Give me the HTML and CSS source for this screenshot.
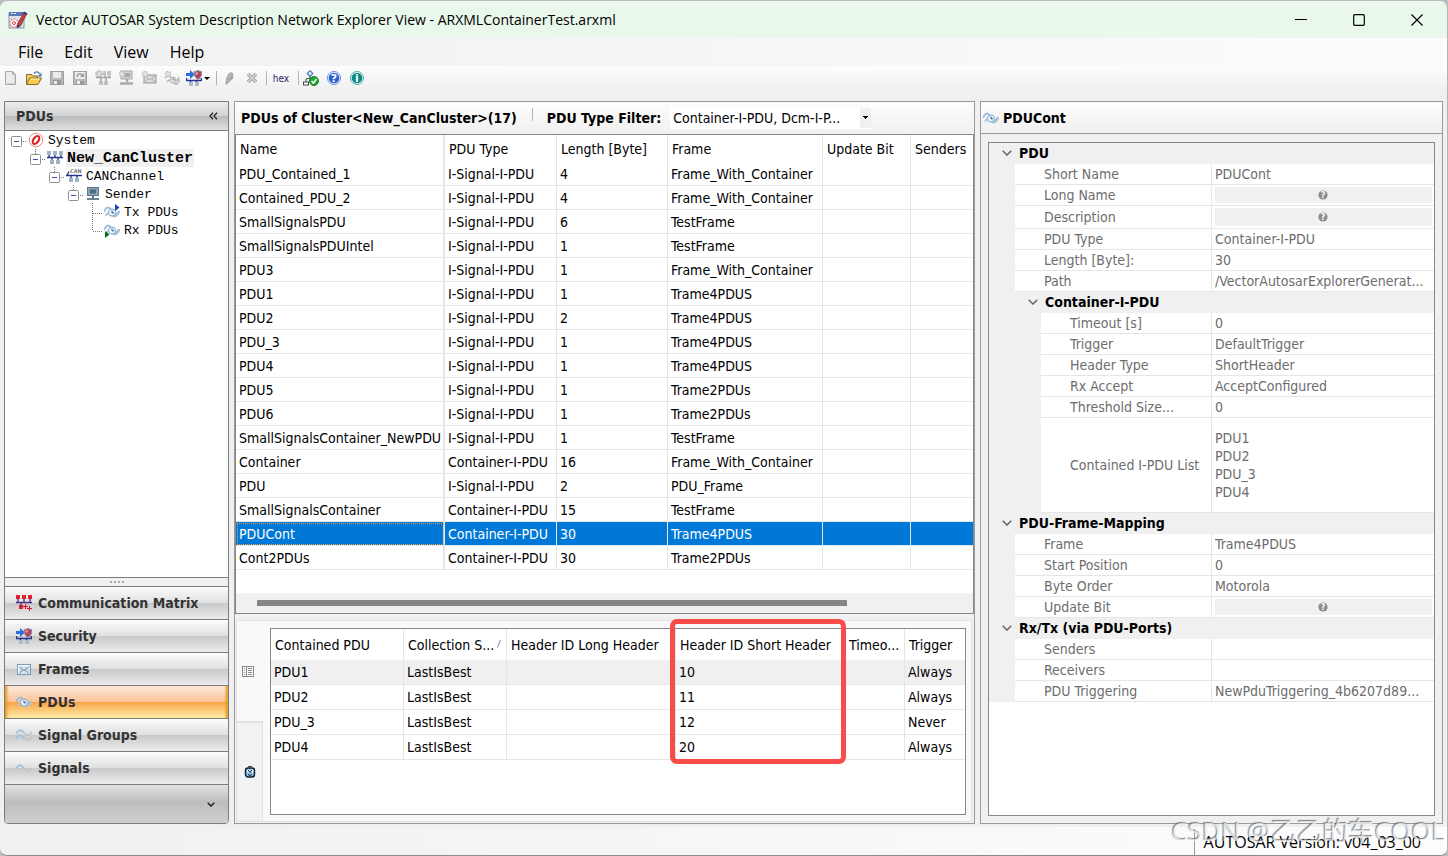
FILE: index.html
```html
<!DOCTYPE html>
<html lang="en">
<head>
    <meta charset="UTF-8">
    <meta name="viewport" content="width=device-width, initial-scale=1.0">
    <title>Vector AUTOSAR System Description Network Explorer View</title>
    <link rel="stylesheet" href="styles.css">
</head>
<body>
    <!-- Icon symbols -->
    <svg class="symbols" aria-hidden="true">
        <symbol id="i-app" viewBox="0 0 20 20">
            <rect x="1" y="3" width="15" height="15" fill="#dfe3ee" stroke="#8c93a8"/>
            <rect x="1" y="2" width="15" height="4" fill="#5a78b8"/>
            <rect x="3" y="3" width="2" height="1" fill="#fff"/>
            <rect x="6" y="3" width="2" height="1" fill="#fff"/>
            <circle cx="6" cy="13" r="4" fill="#fff" stroke="#e8908c" stroke-width="1.500" stroke-dasharray="2 1"/>
            <circle cx="6" cy="13" r="1.500" fill="none" stroke="#e04040"/>
            <path d="M16 2l3 1.500L12.500 16l-3.500 2 .5-4z" fill="#d8382c" stroke="#5b4a74" stroke-width=".8"/>
            <path d="M15.500 2.500l3.500 2" stroke="#333a70" stroke-width="2"/>
            <path d="M9.500 14.500l2.500 1.500-3 2z" fill="#3c3c50"/>
        </symbol>
        <symbol id="i-new" viewBox="0 0 16 16">
            <path d="M2.500 1.500h7l3 3v10h-10z" fill="#ececec" stroke="#a8a8a8"/>
            <path d="M9.500 1.500v3h3" fill="none" stroke="#a8a8a8"/>
            <path d="M11.500 6v7.500H4" fill="none" stroke="#cfcfcf"/>
        </symbol>
        <symbol id="i-open" viewBox="0 0 16 16">
            <path d="M.5 14.500v-10h5l1 1.500h5v3" fill="#f3cf60" stroke="#8a6a28"/>
            <path d="M.5 14.500L3.500 8h12l-3.500 6.500z" fill="#f9cb4c" stroke="#8a6a28"/>
            <path d="M4.500 9h9" stroke="#fff0a8"/>
            <path d="M8 3.500c2-2.500 4.500-2 5.500.5" fill="none" stroke="#4876a8" stroke-width="1.300"/>
            <path d="M15.500 2.500v4h-4z" fill="#4876a8"/>
        </symbol>
        <symbol id="i-save" viewBox="0 0 16 16">
            <rect x="1.500" y="1.500" width="13" height="13" fill="#b8b8b8" stroke="#a0a0a0"/>
            <rect x="4" y="2" width="8" height="6" fill="#ececec"/>
            <rect x="4" y="10" width="8" height="5" fill="#999"/>
            <rect x="5" y="11" width="3" height="3" fill="#eee"/>
        </symbol>
        <symbol id="i-saveas" viewBox="0 0 16 16">
            <rect x="1.500" y="1.500" width="13" height="13" fill="#b8b8b8" stroke="#a0a0a0"/>
            <rect x="3" y="2" width="10" height="7" fill="#ececec"/>
            <path d="M5 7c0-3 3-4 5-2" fill="none" stroke="#999" stroke-width="1.500"/>
            <path d="M12 3v4H8z" fill="#999"/>
            <rect x="4" y="11" width="8" height="4" fill="#999"/>
            <rect x="5" y="11" width="3" height="3" fill="#eee"/>
        </symbol>
        <symbol id="i-gcluster" viewBox="0 0 16 16">
            <circle cx="4" cy="4" r="3" fill="#ddd" stroke="#bbb" stroke-dasharray="1.500 1" stroke-width="2"/>
            <path d="M8 1h3v4H8zM12 1h4v4h-4z" fill="#c4c4c4"/>
            <path d="M1 7.500h15M6 8v3M11 8v3M10 5v2M14 5v2" stroke="#a4a4a4" stroke-width="1.500"/>
            <path d="M4 11h4v4H4zM9 11h4v4H9z" fill="#c0c0c0"/>
        </symbol>
        <symbol id="i-gecu" viewBox="0 0 16 16">
            <rect x="3" y="1" width="11" height="8" fill="#d0d0d0" stroke="#aaa"/>
            <rect x="6" y="3" width="6" height="4" fill="#aaa"/>
            <circle cx="4" cy="4" r="2.500" fill="#e4e4e4" stroke="#bbb" stroke-dasharray="1.500 1" stroke-width="1.500"/>
            <path d="M9 9v3M2 13.500h13" stroke="#aaa" stroke-width="2.500"/>
        </symbol>
        <symbol id="i-gframe" viewBox="0 0 16 16">
            <rect x="2" y="4" width="14" height="10" fill="#c8c8c8"/>
            <rect x="3.500" y="5.500" width="11" height="7" fill="#dcdcdc" stroke="#b4b4b4"/>
            <path d="M4 6l5 4 5-4M4 12l3-3M14 12l-3-3" fill="none" stroke="#aaa"/>
            <circle cx="4" cy="4" r="2.500" fill="#e8e8e8" stroke="#bbb" stroke-dasharray="1.500 1" stroke-width="1.500"/>
        </symbol>
        <symbol id="i-gpdu" viewBox="0 0 16 16">
            <path d="M1 8c3-4 5-2 7 1s5 3 7-2M3 12c3-4 5-1 7 1s4 1 6-4" fill="none" stroke="#c0c0c0" stroke-width="1.800"/>
            <circle cx="9" cy="10" r="3" fill="#e6e6e6" stroke="#b0b0b0"/>
            <path d="M9 8v2h2" fill="none" stroke="#888"/>
            <circle cx="4" cy="4" r="2.500" fill="#e4e4e4" stroke="#bbb" stroke-dasharray="1.500 1" stroke-width="1.500"/>
        </symbol>
        <symbol id="i-security" viewBox="0 0 16 16">
            <path d="M0 3h4V0l5 4.500L4 9V6H0z" fill="#2f6fd8"/>
            <path d="M0 10.500h16M4.500 10v2M10.500 10v2M.5 8v3M15.500 8v3" stroke="#27348b" stroke-width="1.500"/>
            <path d="M8 1.500c2 0 3-.5 4-1.500 1 1 2 1.500 4 1.500 0 4-1 6-4 8-3-2-4-4-4-8z" fill="#b0455c" stroke="#8d97b4"/>
            <path d="M9.500 2.500c1 0 2-.3 2.500-1v3H9.500z" fill="#e2a0ae"/>
            <path d="M3 12h4v4H3zM9 12h4v4H9z" fill="#a9bccb"/>
        </symbol>
        <symbol id="i-pencil" viewBox="0 0 16 16">
            <path d="M7.500 3.500L10 2l2.500 2-.5 4.500-5 5L4.500 15 5 8.500z" fill="#a8a8a8"/>
            <path d="M6 9.500l2 2M10 4l-3 4" fill="none" stroke="#d4d4d4"/>
        </symbol>
        <symbol id="i-del" viewBox="0 0 16 16">
            <path d="M4 4l8 8M12 4l-8 8" stroke="#a4a4a4" stroke-width="3.500"/>
            <path d="M4 4l8 8M12 4l-8 8" stroke="#dcdcdc" stroke-width="1.200"/>
        </symbol>
        <symbol id="i-check" viewBox="0 0 16 16">
            <path d="M7 .7L9.800 3.500 7 6.300 4.200 3.500z" fill="#e8f0fa" stroke="#4a7abc" stroke-width="1.200"/>
            <path d="M7 6.500v2M3 12V9l4-1 4 1" fill="none" stroke="#444"/>
            <rect x=".5" y="12" width="5" height="3" fill="#fff" stroke="#444"/>
            <circle cx="11" cy="11" r="4.500" fill="#1ca82c" stroke="#0c8020"/>
            <path d="M8.500 11l2 2 3-4" fill="none" stroke="#fff" stroke-width="1.500"/>
        </symbol>
        <symbol id="i-help" viewBox="0 0 16 16">
            <circle cx="8" cy="8" r="6.500" fill="#fff" stroke="#5f8ce0"/>
            <circle cx="8" cy="8" r="5.300" fill="#2a60d0"/>
            <text x="8" y="12" text-anchor="middle" fill="#fff" class="glyph glyph-md">?</text>
        </symbol>
        <symbol id="i-info" viewBox="0 0 16 16">
            <circle cx="8" cy="8" r="6.500" fill="#fff" stroke="#3fa8a4"/>
            <circle cx="8" cy="8" r="5.300" fill="#078a84"/>
            <text x="8" y="12" text-anchor="middle" fill="#fff" class="glyph glyph-md">i</text>
        </symbol>
        <symbol id="i-system" viewBox="0 0 16 16">
            <circle cx="8" cy="8" r="6.800" fill="#fff" stroke="#f08c8a"/>
            <ellipse cx="8" cy="8" rx="2.600" ry="4.400" transform="rotate(35 8 8)" fill="#fff" stroke="#d9231f" stroke-width="2.200"/>
        </symbol>
        <symbol id="i-cluster" viewBox="0 0 16 16">
            <path d="M0 1h4v4H0zM6 1h4v4H6zM12 1h4v4h-4z" fill="#9db4c4"/>
            <path d="M0 7.500h16M2 5v3M8 5v3M14 5v3M5 8v3M11 8v3" stroke="#27348b" stroke-width="1.300"/>
            <path d="M3 10h4v4H3zM9 10h4v4H9z" fill="#9db4c4"/>
        </symbol>
        <symbol id="i-channel" viewBox="0 0 16 16">
            <text x="4" y="5" class="glyph glyph-xs" fill="#777">CAN</text>
            <path d="M0 7.500h16M1 7.500l2-4M5 7v3M11 7v3" fill="none" stroke="#27348b" stroke-width="1.300"/>
            <path d="M3 10h4v4H3zM9 10h4v4H9z" fill="#9db4c4"/>
        </symbol>
        <symbol id="i-ecu" viewBox="0 0 16 16">
            <rect x="2.500" y="1.500" width="11" height="8" fill="#8ca4b4" stroke="#5f7686"/>
            <rect x="5" y="3.500" width="6" height="4" fill="#4c6c84"/>
            <path d="M8 10v3" stroke="#5f7686" stroke-width="2"/>
            <rect x="2" y="12" width="12" height="2" fill="#6d8494"/>
        </symbol>
        <symbol id="i-pdu" viewBox="0 0 16 16">
            <path d="M0 8c2-5 5-6 7-2s4 8 8 1" fill="none" stroke="#9cc0de" stroke-width="1.800"/>
            <path d="M2 12c2-5 4-3 6-1s5 3 8-4" fill="none" stroke="#b8c0c8" stroke-width="1.800"/>
            <circle cx="8" cy="8.500" r="3.600" fill="#eaf4fc" stroke="#7fa8cc"/>
            <path d="M8 6.500v2.300h2" fill="none" stroke="#1c4c9c"/>
        </symbol>
        <symbol id="i-tx" viewBox="0 0 16 16">
            <use href="#i-pdu"/>
            <path d="M11 0l4.500 3.500L11 7z" fill="#14489c"/>
        </symbol>
        <symbol id="i-rx" viewBox="0 0 16 16">
            <use href="#i-pdu"/>
            <path d="M1 9l4.500 3.500L1 16z" fill="#0a6a1c"/>
        </symbol>
        <symbol id="i-matrix" viewBox="0 0 16 16">
            <path d="M0 0h4v4H0zM6 0h4v4H6zM12 0h4v4h-4zM3 10h4v4H3z" fill="#e0202c"/>
            <path d="M0 7.500h16M2 4v3M8 4v3M14 4v3M5 8v3" stroke="#4a2f8c" stroke-width="1.300"/>
            <path d="M9.500 9v5M7 11.500h5M13.500 11v5M11 13.500h5" stroke="#d0142c"/>
        </symbol>
        <symbol id="i-frame" viewBox="0 0 16 16">
            <rect x="1.500" y="3.500" width="13" height="10" fill="#d3e2ec" stroke="#7d98ac"/>
            <path d="M2.500 12V4.500h11" fill="none" stroke="#fff"/>
            <path d="M3.500 6L8 9.500 12.500 6M3.500 12L7 9M12.500 12L9 9" fill="none" stroke="#6c8ca4"/>
        </symbol>
        <symbol id="i-siggroup" viewBox="0 0 16 16">
            <path d="M0 7c3-5 5-5 8-1" fill="none" stroke="#9cc0de" stroke-width="1.600"/>
            <path d="M8 6c3 3 5 3 8-1" fill="none" stroke="#c0c4c8" stroke-width="1.600"/>
            <path d="M0 12c3-5 5-5 8-1" fill="none" stroke="#9cc0de" stroke-width="1.600"/>
            <path d="M8 11c3 3 5 3 8-1" fill="none" stroke="#c0c4c8" stroke-width="1.600"/>
        </symbol>
        <symbol id="i-signal" viewBox="0 0 16 16">
            <path d="M0 9c3-5 5-5 8-1" fill="none" stroke="#9cc0de" stroke-width="1.600"/>
            <path d="M8 8c3 4 5 4 8 0" fill="none" stroke="#c0c4c8" stroke-width="1.600"/>
        </symbol>
        <symbol id="i-list" viewBox="0 0 12 12">
            <rect x=".5" y=".5" width="11" height="10" fill="#fff" stroke="#888"/>
            <path d="M4.500 1v9" stroke="#888"/>
            <path d="M2 2.500h1M2 4.500h1M2 6.500h1M2 8.500h1M6 2.500h4M6 4.500h4M6 6.500h4M6 8.500h4" stroke="#888"/>
        </symbol>
        <symbol id="i-clock" viewBox="0 0 12 12">
            <path d="M4 .5h4" stroke="#444"/>
            <rect x="1.500" y="2" width="9" height="9" rx="2.500" fill="#8cc4e8" stroke="#0c1c2c" stroke-width="1.400"/>
            <circle cx="4.500" cy="5" r="1.500" fill="#fff"/>
            <circle cx="8" cy="5" r="1.500" fill="#fff"/>
            <path d="M4 4l2 2.500L8 4M4 8.500l2 1 2-1" fill="none" stroke="#0c1c2c"/>
        </symbol>
        <symbol id="i-chevron" viewBox="0 0 10 6">
            <path d="M.7.7L5 5 9.300.7" fill="none" stroke="#666" stroke-width="1.500"/>
        </symbol>
        <symbol id="i-none" viewBox="0 0 10 10">
            <circle cx="5" cy="5" r="4.600" fill="#8c8c8c"/>
            <text x="5" y="8" text-anchor="middle" fill="#fff" class="glyph glyph-sm">?</text>
        </symbol>
        <!-- tree expander, with and without the line up to the parent -->
        <symbol id="t-root" viewBox="0 0 17 18">
            <rect x=".5" y="5.500" width="10" height="10" rx="1" fill="#fff" stroke="#919191"/>
            <path d="M3 10.500h5" stroke="#3c50a0"/>
            <path d="M12 10.500h4" stroke="#777" stroke-dasharray="1 1"/>
        </symbol>
        <symbol id="t-node" viewBox="0 0 17 18">
            <use href="#t-root"/>
            <path d="M5.500 0v5" stroke="#777" stroke-dasharray="1 1"/>
        </symbol>
        <symbol id="t-leaf" viewBox="0 0 17 18">
            <path d="M5.500 0v18M6 10.500h10" stroke="#777" stroke-dasharray="1 1"/>
        </symbol>
        <symbol id="t-last" viewBox="0 0 17 18">
            <path d="M5.500 0v10M6 10.500h10" stroke="#777" stroke-dasharray="1 1"/>
        </symbol>
    </svg>

    <div class="window">
        <header class="titlebar">
            <svg class="app-icon"><use href="#i-app"/></svg>
            <h1>Vector AUTOSAR System Description Network Explorer View - ARXMLContainerTest.arxml</h1>
            <div class="window-buttons">
                <button type="button" aria-label="Minimize"><svg viewBox="0 0 12 12"><path d="M0 5.500h12" stroke="#000"/></svg></button>
                <button type="button" aria-label="Maximize"><svg viewBox="0 0 12 12"><rect x=".7" y=".7" width="10.600" height="10.600" rx="1" fill="none" stroke="#000" stroke-width="1.200"/></svg></button>
                <button type="button" aria-label="Close"><svg viewBox="0 0 12 12"><path d="M.5.5l11 11M11.500.5l-11 11" stroke="#000" stroke-width="1.200"/></svg></button>
            </div>
        </header>

        <nav class="menubar">
            <button type="button">File</button>
            <button type="button">Edit</button>
            <button type="button">View</button>
            <button type="button">Help</button>
        </nav>

        <div class="toolbar">
            <button type="button" aria-label="New"><svg><use href="#i-new"/></svg></button>
            <button type="button" aria-label="Open"><svg><use href="#i-open"/></svg></button>
            <button type="button" aria-label="Save"><svg><use href="#i-save"/></svg></button>
            <button type="button" aria-label="Save as"><svg><use href="#i-saveas"/></svg></button>
            <button type="button" aria-label="New cluster"><svg><use href="#i-gcluster"/></svg></button>
            <button type="button" aria-label="New ECU"><svg><use href="#i-gecu"/></svg></button>
            <button type="button" aria-label="New frame"><svg><use href="#i-gframe"/></svg></button>
            <button type="button" aria-label="New PDU"><svg><use href="#i-gpdu"/></svg></button>
            <button type="button" class="split" aria-label="Security"><svg><use href="#i-security"/></svg><span class="caret"></span></button>
            <span class="sep"></span>
            <button type="button" aria-label="Edit"><svg><use href="#i-pencil"/></svg></button>
            <button type="button" aria-label="Delete"><svg><use href="#i-del"/></svg></button>
            <span class="sep"></span>
            <button type="button" class="hex">hex</button>
            <span class="sep"></span>
            <button type="button" aria-label="Check"><svg><use href="#i-check"/></svg></button>
            <button type="button" aria-label="Help"><svg><use href="#i-help"/></svg></button>
            <button type="button" aria-label="About"><svg><use href="#i-info"/></svg></button>
        </div>

        <main class="panels">
            <!-- Navigation -->
            <aside class="sidebar">
                <div class="sidebar-head">
                    <h2>PDUs</h2>
                    <button type="button" aria-label="Collapse"><svg viewBox="0 0 9 8"><path d="M4 .7L1 4l3 3.300M8 .7L5 4l3 3.300" fill="none" stroke="#222" stroke-width="1.300"/></svg></button>
                </div>
                <ul class="tree">
                    <li>
                        <div class="node"><button type="button" aria-label="Toggle System"><svg><use href="#t-root"/></svg></button><svg class="icon"><use href="#i-system"/></svg><span>System</span></div>
                        <ul>
                            <li>
                                <div class="node current"><button type="button" aria-label="Toggle cluster"><svg><use href="#t-node"/></svg></button><svg class="icon"><use href="#i-cluster"/></svg><span>New_CanCluster</span></div>
                                <ul>
                                    <li>
                                        <div class="node"><button type="button" aria-label="Toggle channel"><svg><use href="#t-node"/></svg></button><svg class="icon"><use href="#i-channel"/></svg><span>CANChannel</span></div>
                                        <ul>
                                            <li>
                                                <div class="node"><button type="button" aria-label="Toggle Sender"><svg><use href="#t-node"/></svg></button><svg class="icon"><use href="#i-ecu"/></svg><span>Sender</span></div>
                                                <ul>
                                                    <li><div class="node"><svg class="line"><use href="#t-leaf"/></svg><svg class="icon"><use href="#i-tx"/></svg><span>Tx PDUs</span></div></li>
                                                    <li><div class="node"><svg class="line"><use href="#t-last"/></svg><svg class="icon"><use href="#i-rx"/></svg><span>Rx PDUs</span></div></li>
                                                </ul>
                                            </li>
                                        </ul>
                                    </li>
                                </ul>
                            </li>
                        </ul>
                    </li>
                </ul>
                <div class="splitter"><i></i><i></i><i></i><i></i></div>
                <nav class="sections">
                    <button type="button"><svg><use href="#i-matrix"/></svg>Communication Matrix</button>
                    <button type="button"><svg><use href="#i-security"/></svg>Security</button>
                    <button type="button"><svg><use href="#i-frame"/></svg>Frames</button>
                    <button type="button" class="active"><svg><use href="#i-pdu"/></svg>PDUs</button>
                    <button type="button"><svg><use href="#i-siggroup"/></svg>Signal Groups</button>
                    <button type="button"><svg><use href="#i-signal"/></svg>Signals</button>
                </nav>
                <div class="sections-foot">
                    <button type="button" aria-label="Configure buttons"><svg viewBox="0 0 8 5"><path d="M.7.7L4 4 7.300.7" fill="none" stroke="#222" stroke-width="1.500"/></svg></button>
                </div>
            </aside>

            <!-- PDU list -->
            <section class="list">
                <div class="panel-head">
                    <h2>PDUs of Cluster&lt;New_CanCluster&gt;(17)</h2>
                    <span class="divider"></span>
                    <label for="pduFilter">PDU Type Filter:</label>
                    <select id="pduFilter">
                        <option>Container-I-PDU, Dcm-I-P...</option>
                    </select>
                </div>
                <div class="grid-box">
                    <div class="grid-scroll">
                        <table class="pdus">
                            <colgroup><col class="c-name"><col class="c-type"><col class="c-len"><col class="c-frame"><col class="c-upd"><col></colgroup>
                            <thead>
                                <tr><th>Name</th><th>PDU Type</th><th>Length [Byte]</th><th>Frame</th><th>Update Bit</th><th>Senders</th></tr>
                            </thead>
                            <tbody>
                                <tr><td>PDU_Contained_1</td><td>I-Signal-I-PDU</td><td>4</td><td>Frame_With_Container</td><td></td><td></td></tr>
                                <tr><td>Contained_PDU_2</td><td>I-Signal-I-PDU</td><td>4</td><td>Frame_With_Container</td><td></td><td></td></tr>
                                <tr><td>SmallSignalsPDU</td><td>I-Signal-I-PDU</td><td>6</td><td>TestFrame</td><td></td><td></td></tr>
                                <tr><td>SmallSignalsPDUIntel</td><td>I-Signal-I-PDU</td><td>1</td><td>TestFrame</td><td></td><td></td></tr>
                                <tr><td>PDU3</td><td>I-Signal-I-PDU</td><td>1</td><td>Frame_With_Container</td><td></td><td></td></tr>
                                <tr><td>PDU1</td><td>I-Signal-I-PDU</td><td>1</td><td>Trame4PDUS</td><td></td><td></td></tr>
                                <tr><td>PDU2</td><td>I-Signal-I-PDU</td><td>2</td><td>Trame4PDUS</td><td></td><td></td></tr>
                                <tr><td>PDU_3</td><td>I-Signal-I-PDU</td><td>1</td><td>Trame4PDUS</td><td></td><td></td></tr>
                                <tr><td>PDU4</td><td>I-Signal-I-PDU</td><td>1</td><td>Trame4PDUS</td><td></td><td></td></tr>
                                <tr><td>PDU5</td><td>I-Signal-I-PDU</td><td>1</td><td>Trame2PDUs</td><td></td><td></td></tr>
                                <tr><td>PDU6</td><td>I-Signal-I-PDU</td><td>1</td><td>Trame2PDUs</td><td></td><td></td></tr>
                                <tr><td>SmallSignalsContainer_NewPDU</td><td>I-Signal-I-PDU</td><td>1</td><td>TestFrame</td><td></td><td></td></tr>
                                <tr><td>Container</td><td>Container-I-PDU</td><td>16</td><td>Frame_With_Container</td><td></td><td></td></tr>
                                <tr><td>PDU</td><td>I-Signal-I-PDU</td><td>2</td><td>PDU_Frame</td><td></td><td></td></tr>
                                <tr><td>SmallSignalsContainer</td><td>Container-I-PDU</td><td>15</td><td>TestFrame</td><td></td><td></td></tr>
                                <tr class="selected"><td>PDUCont</td><td>Container-I-PDU</td><td>30</td><td>Trame4PDUS</td><td></td><td></td></tr>
                                <tr><td>Cont2PDUs</td><td>Container-I-PDU</td><td>30</td><td>Trame2PDUs</td><td></td><td></td></tr>
                            </tbody>
                        </table>
                    </div>
                    <div class="hscroll"><div class="thumb"></div></div>
                </div>

                <!-- Contained PDUs of the selected container -->
                <div class="detail">
                    <div class="detail-tabs">
                        <button type="button" class="open" aria-label="Contained PDUs"><svg><use href="#i-list"/></svg></button>
                        <button type="button" aria-label="Timings"><svg><use href="#i-clock"/></svg></button>
                    </div>
                    <div class="detail-body">
                        <table class="contained">
                            <colgroup><col class="d-pdu"><col class="d-coll"><col class="d-long"><col class="d-short"><col class="d-time"><col></colgroup>
                            <thead>
                                <tr><th>Contained PDU</th><th>Collection S...<svg class="sort" viewBox="0 0 4 8"><path d="M3.500 0L.5 7.500" stroke="#888"/></svg></th><th>Header ID Long Header</th><th>Header ID Short Header</th><th>Timeo...</th><th>Trigger</th></tr>
                            </thead>
                            <tbody>
                                <tr class="focused"><td>PDU1</td><td>LastIsBest</td><td></td><td>10</td><td></td><td>Always</td></tr>
                                <tr><td>PDU2</td><td>LastIsBest</td><td></td><td>11</td><td></td><td>Always</td></tr>
                                <tr><td>PDU_3</td><td>LastIsBest</td><td></td><td>12</td><td></td><td>Never</td></tr>
                                <tr><td>PDU4</td><td>LastIsBest</td><td></td><td>20</td><td></td><td>Always</td></tr>
                            </tbody>
                        </table>
                        <div class="marker"></div>
                    </div>
                </div>
            </section>

            <!-- Properties -->
            <section class="props">
                <div class="panel-head">
                    <svg class="icon"><use href="#i-pdu"/></svg>
                    <h2>PDUCont</h2>
                </div>
                <div class="props-box">
                    <table class="props-table">
                        <colgroup><col class="p-ind"><col class="p-ind"><col class="p-label"><col></colgroup>
                        <tbody>
                            <tr class="group"><td><button type="button" aria-label="Toggle PDU"><svg><use href="#i-chevron"/></svg></button></td><th colspan="3">PDU</th></tr>
                            <tr><td></td><th colspan="2">Short Name</th><td>PDUCont</td></tr>
                            <tr><td></td><th colspan="2">Long Name</th><td><div class="unset"><svg><use href="#i-none"/></svg></div></td></tr>
                            <tr class="tall"><td></td><th colspan="2">Description</th><td><div class="unset"><svg><use href="#i-none"/></svg></div></td></tr>
                            <tr><td></td><th colspan="2">PDU Type</th><td>Container-I-PDU</td></tr>
                            <tr><td></td><th colspan="2">Length [Byte]:</th><td>30</td></tr>
                            <tr><td></td><th colspan="2">Path</th><td>/VectorAutosarExplorerGenerat...</td></tr>
                            <tr class="group sub"><td></td><td><button type="button" aria-label="Toggle Container-I-PDU"><svg><use href="#i-chevron"/></svg></button></td><th colspan="2">Container-I-PDU</th></tr>
                            <tr class="nested"><td></td><td></td><th>Timeout [s]</th><td>0</td></tr>
                            <tr class="nested"><td></td><td></td><th>Trigger</th><td>DefaultTrigger</td></tr>
                            <tr class="nested"><td></td><td></td><th>Header Type</th><td>ShortHeader</td></tr>
                            <tr class="nested"><td></td><td></td><th>Rx Accept</th><td>AcceptConfigured</td></tr>
                            <tr class="nested"><td></td><td></td><th>Threshold Size...</th><td>0</td></tr>
                            <tr class="nested multi"><td></td><td></td><th>Contained I-PDU List</th><td>PDU1<br>PDU2<br>PDU_3<br>PDU4</td></tr>
                            <tr class="group"><td><button type="button" aria-label="Toggle PDU-Frame-Mapping"><svg><use href="#i-chevron"/></svg></button></td><th colspan="3">PDU-Frame-Mapping</th></tr>
                            <tr><td></td><th colspan="2">Frame</th><td>Trame4PDUS</td></tr>
                            <tr><td></td><th colspan="2">Start Position</th><td>0</td></tr>
                            <tr><td></td><th colspan="2">Byte Order</th><td>Motorola</td></tr>
                            <tr><td></td><th colspan="2">Update Bit</th><td><div class="unset"><svg><use href="#i-none"/></svg></div></td></tr>
                            <tr class="group"><td><button type="button" aria-label="Toggle Rx/Tx"><svg><use href="#i-chevron"/></svg></button></td><th colspan="3">Rx/Tx (via PDU-Ports)</th></tr>
                            <tr><td></td><th colspan="2">Senders</th><td></td></tr>
                            <tr><td></td><th colspan="2">Receivers</th><td></td></tr>
                            <tr><td></td><th colspan="2">PDU Triggering</th><td>NewPduTriggering_4b6207d89...</td></tr>
                        </tbody>
                    </table>
                </div>
            </section>
        </main>

        <footer class="statusbar">
            <span class="version">AUTOSAR Version: v04_03_00</span>
        </footer>
        <div class="watermark">CSDN @乙乙的车COOL</div>
    </div>
</body>
</html>
```

FILE: styles.css
```css
* {
    margin: 0;
    padding: 0;
    box-sizing: border-box;
}

:root {
    --ui: "DejaVu Sans Condensed", "Noto Sans", sans-serif;
    --shell: "Open Sans", "Noto Sans", sans-serif;
    --line: #e6e6e6;
    --frame: #9a9a9a;
    --box: #828790;
}

body {
    height: 100vh;
    padding-top: 1px;
    background: #bdbdc1;
    font-family: var(--ui);
    font-size: 14px;
    color: #000;
    overflow: hidden;
}

button,
select {
    font: inherit;
    color: inherit;
    background: none;
    border: none;
}

svg {
    display: block;
    width: 16px;
    height: 16px;
    flex: none;
}

.symbols {
    display: none;
}

.glyph {
    font-family: "DejaVu Sans", sans-serif;
    font-weight: bold;
}

.glyph-xs { font-size: 5px; }
.glyph-sm { font-size: 8px; }
.glyph-md { font-size: 11px; }

.window {
    position: relative;
    display: flex;
    flex-direction: column;
    height: 100%;
    background: #f0f0f0;
    border-right: 1px solid #b4b4b4;
    border-bottom: 1px solid #8c8c8c;
    border-radius: 8px;
    overflow: hidden;
}

/* Title bar, menu, toolbar */
.titlebar {
    display: flex;
    align-items: center;
    height: 37px;
    padding-left: 8px;
    background: #eaf7eb;
}

.app-icon {
    width: 20px;
    height: 20px;
    margin-right: 8px;
}

.titlebar h1 {
    flex: 1;
    font-family: var(--shell);
    font-size: 14px;
    font-weight: normal;
}

.window-buttons {
    display: flex;
    gap: 12px;
    padding-right: 7px;
}

.window-buttons button {
    display: flex;
    align-items: center;
    justify-content: center;
    width: 46px;
    height: 36px;
}

.window-buttons svg {
    width: 12px;
    height: 12px;
}

.menubar {
    display: flex;
    gap: 21px;
    height: 28px;
    padding-left: 18px;
    font-family: var(--shell);
    font-size: 16px;
    background: linear-gradient(90deg, #f0f0f0, #fcfcfc);
}

.toolbar {
    display: flex;
    align-items: center;
    height: 24px;
    margin-bottom: 11px;
    background: linear-gradient(#fdfdfd, #f0f0f0);
}

.toolbar button {
    display: flex;
    align-items: center;
    justify-content: center;
    width: 23px;
    height: 22px;
}

.toolbar button:first-child {
    width: 22px;
}

.toolbar .split {
    justify-content: flex-start;
    gap: 2px;
    width: 30px;
    padding-left: 3px;
}

.caret {
    border: 3px solid transparent;
    border-top-color: #000;
    border-bottom: none;
}

.toolbar .hex {
    width: 28px;
    font-size: 10px;
    color: #27276b;
}

.sep {
    width: 4px;
    height: 14px;
    border-right: 1px solid #b4b4b4;
}

.panels {
    flex: 1;
    min-height: 0;
    display: grid;
    grid-template-columns: 225px minmax(0, 741fr) minmax(0, 463fr);
    gap: 5px;
    padding: 0 4px;
}

/* Sidebar */
.sidebar {
    display: flex;
    flex-direction: column;
    background: #fff;
    border: 1px solid #7c7c7c;
    border-radius: 0 0 4px 4px;
    overflow: hidden;
    color: #333;
}

.sidebar-head {
    display: flex;
    align-items: center;
    justify-content: space-between;
    height: 29px;
    padding: 0 10px 0 11px;
    border-bottom: 1px solid #7c7c7c;
    background: linear-gradient(#ededed, #d2d2d2 50%, #bcbcbc 52%, #e0e0e0);
}

.sidebar-head h2,
.panel-head h2,
.panel-head label {
    font-size: 14px;
    font-weight: bold;
}

.sidebar-head svg {
    width: 9px;
    height: 8px;
}

.tree {
    flex: 1;
    padding-left: 6px;
    font-family: "Liberation Mono", monospace;
    font-size: 13px;
    color: #000;
}

.tree ul {
    padding-left: 19px;
}

.tree li {
    list-style: none;
}

.node {
    display: flex;
    align-items: center;
    height: 18px;
}

.node button,
.node button svg,
.node .line {
    width: 17px;
    height: 18px;
}

.node .icon {
    margin-right: 3px;
}

.node span {
    padding: 2px 1px 0;
    line-height: 16px;
}

.node.current span {
    font-size: 15px;
    font-weight: bold;
    background: #f0f0f0;
}

.splitter {
    display: flex;
    align-items: center;
    justify-content: center;
    gap: 2px;
    height: 9px;
    border-top: 1px solid #7c7c7c;
    background: #f0f0f0;
}

.splitter i {
    width: 2px;
    height: 2px;
    background: #aaa;
}

.sections button {
    display: flex;
    align-items: center;
    gap: 6px;
    width: 100%;
    height: 33px;
    padding-left: 11px;
    border-top: 1px solid #7c7c7c;
    font-weight: bold;
    background: linear-gradient(#fcfcfc, #e0e0e0 49%, #c9c9c9 51%, #ececec);
}

.sections .active {
    background: linear-gradient(#fdeadf, #fbc398 49%, #f8a548 51%, #ffeea8);
    box-shadow: inset 4px 0 3px -2px #e29a16, inset -4px 0 3px -2px #e29a16;
}

.sections-foot {
    display: flex;
    align-items: center;
    justify-content: flex-end;
    height: 39px;
    padding-right: 13px;
    border-top: 1px solid #7c7c7c;
    background: linear-gradient(#e2e2e2, #bdbdbd 45%, #cfcfcf);
}

.sections-foot svg {
    width: 8px;
    height: 5px;
}

/* Shared panel parts */
.list,
.props {
    display: flex;
    flex-direction: column;
    min-width: 0;
    border: 1px solid var(--frame);
}

.panel-head {
    display: flex;
    align-items: center;
    flex: none;
    height: 32px;
    padding-left: 6px;
    white-space: nowrap;
    background: linear-gradient(#fdfdfd, #f0f0f0);
}

.divider {
    width: 1px;
    height: 13px;
    margin: 0 14px 8px 15px;
    background: #b8b8b8;
}

/* The arrow is three stacked bars on a gray button */
.panel-head select {
    width: 201px;
    height: 22px;
    margin-left: 9px;
    padding-left: 3px;
    appearance: none;
    background-color: #fff;
    background-image: linear-gradient(#000, #000), linear-gradient(#000, #000), linear-gradient(#000, #000), linear-gradient(#f0f0f0, #f0f0f0);
    background-position: right 3px top 9px, right 4px top 10px, right 5px top 11px, right center;
    background-size: 5px 1px, 3px 1px, 1px 1px, 11px 20px;
    background-repeat: no-repeat;
}

table {
    width: 100%;
    table-layout: fixed;
    border-spacing: 0;
}

th,
td {
    text-align: left;
    font-weight: normal;
    white-space: nowrap;
    overflow: hidden;
}

/* PDU table */
.grid-box {
    display: flex;
    flex-direction: column;
    flex: 1;
    border: 1px solid var(--box);
    background: #fff;
}

.grid-scroll {
    flex: 1;
    overflow: hidden;
}

.c-name { width: 209px; }
.c-type { width: 112px; }
.c-len { width: 111px; }
.c-frame { width: 155px; }
.c-upd { width: 88px; }

.pdus th,
.pdus td {
    height: 24px;
    padding-left: 3px;
    border-right: 1px solid var(--line);
    border-bottom: 1px solid var(--line);
}

.pdus th {
    height: 27px;
    padding-left: 4px;
    border-bottom: none;
}

.pdus th:first-child,
.pdus td:first-child {
    border-right-width: 2px;
}

.pdus th:last-child,
.pdus td:last-child {
    border-right: none;
}

.pdus .selected td {
    color: #fff;
    background: #0078d7;
}

.pdus .selected td:first-child {
    outline: 1px dotted #e8a050;
    outline-offset: -2px;
}

.hscroll {
    height: 20px;
    padding: 7px 126px 0 21px;
    background: #f0f0f0;
}

.thumb {
    height: 6px;
    background: #858585;
}

/* Contained PDUs */
.detail {
    display: flex;
    height: 202px;
    margin: 6px 2px 1px 1px;
    border: 1px solid #e2e2e2;
    background: #f9f9f9;
}

.detail-tabs {
    display: flex;
    flex-direction: column;
    width: 26px;
}

.detail-tabs button {
    display: flex;
    align-items: center;
    justify-content: center;
    flex: 1;
    border-top: 2px solid #e2e2e2;
    border-right: 1px solid #e2e2e2;
    background: #f2f2f2;
}

.detail-tabs .open {
    padding-right: 3px;
    border-color: transparent;
    background: none;
}

.detail-tabs svg {
    width: 12px;
    height: 12px;
}

.detail-body {
    position: relative;
    flex: 1;
    min-width: 0;
    margin: 7px 5px 6px 7px;
    border: 1px solid var(--box);
    background: #fff;
}

.d-pdu { width: 133px; }
.d-coll { width: 103px; }
.d-long { width: 169px; }
.d-short { width: 169px; }
.d-time { width: 60px; }

.contained th,
.contained td {
    height: 25px;
    padding-left: 3px;
    border-right: 1px solid var(--line);
    border-bottom: 1px solid var(--line);
}

.contained th {
    height: 31px;
    padding-left: 4px;
    border-bottom: none;
}

.contained th:last-child,
.contained td:last-child {
    border-right: none;
}

.contained .focused td {
    background: #f0f0f0;
}

.sort {
    display: inline-block;
    width: 4px;
    height: 8px;
    margin-left: 3px;
    vertical-align: 2px;
}

/* Highlight around the short header column */
.marker {
    position: absolute;
    top: -10px;
    left: 399px;
    width: 176px;
    height: 145px;
    border: 5px solid #f94b47;
    border-radius: 7px;
}

/* Properties */
.props .panel-head {
    gap: 4px;
    padding-left: 2px;
    border-bottom: 1px solid var(--frame);
}

.props-box {
    flex: 1;
    margin: 8px 7px 7px;
    border: 1px solid var(--box);
    background: #fff;
}

.p-ind { width: 26px; }
.p-label { width: 171px; }

.props-table th,
.props-table td {
    height: 21px;
    border-bottom: 1px solid var(--line);
    line-height: 18px;
    color: #6d6d6d;
}

.props-table th {
    padding-left: 29px;
    border-right: 1px solid var(--line);
}

.props-table td:last-child {
    padding-left: 3px;
}

.props-table td:first-child,
.props-table .nested td:nth-child(2),
.props-table .group td,
.props-table .group th {
    padding: 0;
    background: #f0f0f0;
    border-color: #f0f0f0;
}

.props-table .group th {
    padding-left: 4px;
    border-right: none;
    font-weight: bold;
    color: #000;
}

.props-table .tall th,
.props-table .tall td {
    height: 23px;
}

.props-table .multi th,
.props-table .multi td {
    height: 95px;
}

.props-table button {
    display: block;
    margin-left: 13px;
}

.props-table button svg {
    width: 10px;
    height: 6px;
}

.unset {
    display: flex;
    align-items: center;
    justify-content: center;
    height: 16px;
    margin-right: 2px;
    padding-right: 2px;
    background: #f0f0f0;
}

.tall .unset {
    height: 18px;
}

.unset svg {
    width: 10px;
    height: 10px;
}

/* Status bar */
.statusbar {
    display: flex;
    justify-content: flex-end;
    align-items: flex-end;
    height: 28px;
    margin-top: 3px;
    background: linear-gradient(90deg, #f0f0f0, #fdfdfd);
}

.version {
    padding: 0 26px 0 9px;
    border-left: 1px solid #999;
    font-family: var(--shell);
    font-size: 16px;
    line-height: 26px;
}

.watermark {
    position: absolute;
    right: 2px;
    bottom: 6px;
    font-family: "Open Sans", "Noto Sans CJK SC", sans-serif;
    font-size: 26px;
    line-height: 36px;
    color: rgba(255, 255, 255, 0.7);
    text-shadow: -1px -1px 1px rgba(90, 90, 90, 0.7);
    white-space: nowrap;
    pointer-events: none;
}
```
